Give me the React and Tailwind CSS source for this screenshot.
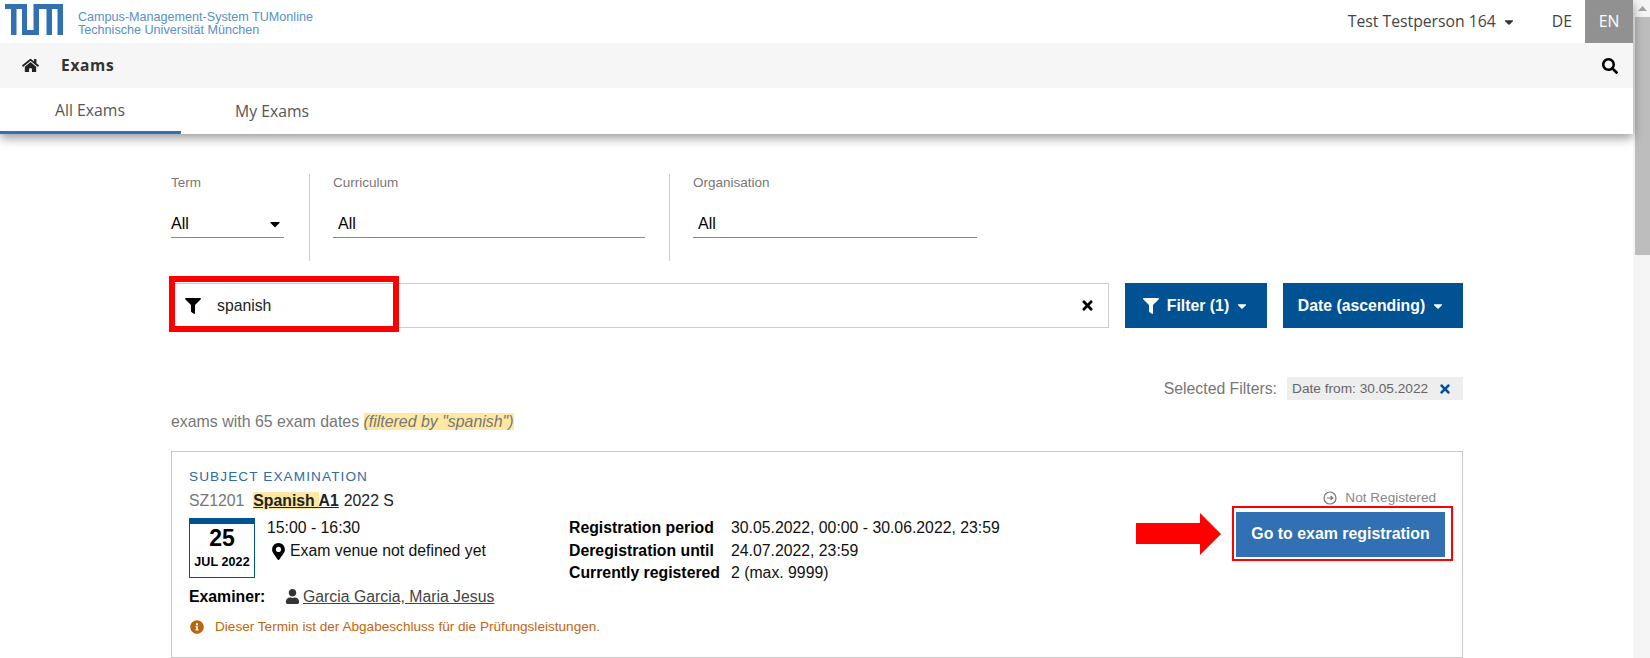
import React from "react";
import { FaHome, FaSearch, FaFilter, FaTimes, FaMapMarkerAlt, FaUser, FaInfoCircle, FaCaretDown } from "react-icons/fa";

const sans = "font-['Liberation_Sans',Arial,sans-serif]";
const open = "font-['Open_Sans',sans-serif]";

const TumLogo = () => (
  <svg width="58" height="31" viewBox="0 0 58 31" fill="#3070b3">
    <path d="M0 0H22V26H28.5V0H58V31H52.5V5H47V31H41.5V5H34V31H17V5H11.5V31H6V5H0Z" />
  </svg>
);

const Field = ({ label, value, width, select }) => (
  <div className={width}>
    <div className="mt-[2px] text-[13.5px] leading-[14px] text-[#777]">{label}</div>
    <div className={`mt-[20px] flex h-[28px] items-center justify-between border-b border-[#888] text-[16px] text-black ${select ? "" : "pl-[5px]"}`}>
      <span>{value}</span>
      {select && <FaCaretDown className="mr-[1px] text-[16px]" />}
    </div>
  </div>
);

const Row = ({ label, value }) => (
  <div className="flex h-[22.5px] items-center text-[15.8px]">
    <span className="w-[162px] font-bold text-black">{label}</span>
    <span className="text-[#111]">{value}</span>
  </div>
);

export default function App() {
  return (
    <div className={`flex h-[658px] w-[1650px] overflow-hidden bg-white ${sans}`}>
      <div className="w-[1633px] shrink-0">
        <div className="relative z-10 bg-white shadow-[0_4px_10px_rgba(0,0,0,0.4)]">
          <div className="flex h-[43px] items-center justify-between pl-[5px]">
            <div className="flex items-center">
              <div className="mt-[-4px]">
                <TumLogo />
              </div>
              <div className="ml-[15px] mt-[5px] text-[12.6px] leading-[13.5px] text-[#5b8fc7]">
                <div>Campus-Management-System TUMonline</div>
                <div>Technische Universität München</div>
              </div>
            </div>
            <div className={`flex h-full items-center text-[15.75px] text-[#444] ${open}`}>
              <span>Test Testperson 164</span>
              <FaCaretDown className="ml-[6px] text-[14px] text-[#333]" />
              <span className="ml-[36px] mr-[13px]">DE</span>
              <span className="flex h-full w-[48px] items-center justify-center bg-[#919191] text-white">EN</span>
            </div>
          </div>
          <div className={`flex h-[45px] items-center justify-between bg-[#f6f6f6] pl-[22px] pr-[15px] ${open}`}>
            <div className="flex items-center">
              <FaHome className="text-[17px] text-[#222]" />
              <span className="ml-[22px] text-[15.5px] font-bold tracking-[0.7px] text-[#333]">Exams</span>
            </div>
            <FaSearch className="text-[16px] text-black" />
          </div>
          <div className={`flex h-[46px] text-[15.75px] text-[#555] ${open}`}>
            <div className="flex w-[181px] items-center justify-center border-b-[3px] border-[#3070b3] pr-[1px] pt-[3px]">All Exams</div>
            <div className="ml-[54px] flex items-center pt-[1px]">My Exams</div>
          </div>
        </div>

        <div className="ml-[171px] w-[1292px] pt-[40px]">
          <div className="flex h-[87px]">
            <Field label="Term" value="All" width="w-[113px]" select />
            <div className="ml-[25px] mr-[23px] w-px bg-[#ccc]" />
            <Field label="Curriculum" value="All" width="w-[312px]" />
            <div className="ml-[24px] mr-[23px] w-px bg-[#ccc]" />
            <Field label="Organisation" value="All" width="w-[284px]" />
          </div>

          <div className="mt-[22px] flex h-[45px]">
            <div className="relative flex w-[938px] items-center border border-[#ccc] px-[13px] text-[15.75px] text-[#222]">
              <FaFilter className="text-[16px] text-black" />
              <span className="ml-[16px]">spanish</span>
              <FaTimes className="ml-auto text-[15px] text-black" />
              <div className="absolute left-[-3px] top-[-8px] h-[56px] w-[230px] border-[6px] border-[#ff0000]" />
            </div>
            <button className="ml-[16px] flex w-[142px] items-center justify-center bg-[#005293] text-[15.8px] font-bold text-white">
              <FaFilter className="mr-[8px] text-[16px]" />
              Filter (1)
              <FaCaretDown className="ml-[6px] text-[14px]" />
            </button>
            <button className="ml-[16px] flex w-[180px] items-center justify-center bg-[#005293] pr-[3px] text-[15.8px] font-bold text-white">
              Date (ascending)
              <FaCaretDown className="ml-[6px] text-[14px]" />
            </button>
          </div>

          <div className="mt-[49px] flex items-center justify-end">
            <span className="text-[15.8px] text-[#777]">Selected Filters:</span>
            <div className="ml-[10px] flex h-[23px] w-[176px] items-center bg-[#eeeeee] pl-[5px] text-[13.7px] text-[#666]">
              Date from: 30.05.2022
              <FaTimes className="ml-[10px] text-[14px] text-[#005293]" />
            </div>
          </div>

          <div className="mt-[12px] h-[18px] text-[15.9px] leading-[18px] text-[#777]">
            exams with 65 exam dates <span className="bg-[#ffe8a3] italic">(filtered by "spanish")</span>
          </div>

          <div className="mt-[20px] flex h-[207px] border border-[#c8c8c8] pl-[17px] pr-[9px] pt-[18px]">
            <div className="flex-1">
              <div className="text-[13.6px] leading-[14px] tracking-[1.1px] text-[#2d6ca8]">SUBJECT EXAMINATION</div>
              <div className="mt-[7px] text-[15.8px] leading-[20px] text-[#222]">
                <span className="text-[#777]">SZ1201</span>
                <span className="ml-[9px] font-bold underline">
                  <span className="bg-[#ffe8a3]">Spanish </span>A1
                </span>
                <span className="ml-[5px]">2022 S</span>
              </div>
              <div className="mt-[7px] flex h-[60px]">
                <div className="h-[60px] w-[66px] border border-t-[6px] border-[#005293] text-center text-black">
                  <div className="text-[23px] font-bold leading-[28px]">25</div>
                  <div className="mt-[3px] text-[12.5px] font-bold leading-[14px] tracking-[0.1px]">JUL 2022</div>
                </div>
                <div className="ml-[12px] w-[302px] text-[15.8px] text-[#111]">
                  <div className="mt-[-1px] flex h-[23px] items-center">15:00 - 16:30</div>
                  <div className="flex h-[23px] items-center pl-[3px]">
                    <FaMapMarkerAlt className="mr-[3px] text-[17px] text-black" />
                    Exam venue not defined yet
                  </div>
                </div>
                <div className="mt-[-1px]">
                  <Row label="Registration period" value="30.05.2022, 00:00 - 30.06.2022, 23:59" />
                  <Row label="Deregistration until" value="24.07.2022, 23:59" />
                  <Row label="Currently registered" value="2 (max. 9999)" />
                </div>
              </div>
              <div className="mt-[10px] flex h-[18px] items-center text-[15.8px]">
                <span className="w-[96px] font-bold text-black">Examiner:</span>
                <FaUser className="mr-[3px] text-[15px] text-[#333]" />
                <span className="text-[#444] underline">Garcia Garcia, Maria Jesus</span>
              </div>
              <div className="mt-[13px] flex h-[16px] items-center text-[13.6px] text-[#c4660f]">
                <FaInfoCircle className="ml-[1px] mr-[11px] text-[14px] text-[#b8660f]" />
                Dieser Termin ist der Abgabeschluss für die Prüfungsleistungen.
              </div>
            </div>
            <div className="relative flex w-[210px] flex-col items-end">
              <div className="mr-[17px] mt-[20px] flex h-[16px] items-center text-[13.6px] text-[#888]">
                <svg className="mr-[8px]" width="14" height="14" viewBox="0 0 14 14" fill="none" stroke="#777" strokeWidth="1.2">
                  <circle cx="7" cy="7" r="6" />
                  <path d="M4 7H9.5M7.5 5L9.8 7L7.5 9" />
                </svg>
                Not Registered
              </div>
              <button className="mr-[8px] mt-[6px] h-[45px] w-[209px] bg-[#3070b3] text-[15.9px] font-bold text-white">
                Go to exam registration
              </button>
              <div className="absolute right-0 top-[36px] h-[55px] w-[221px] border-2 border-[#ff0000]" />
              <svg className="absolute left-[-107px] top-[43px]" width="85" height="42" viewBox="0 0 85 42" fill="#ff0000">
                <path d="M0 10H64V0L85 21L64 42V31H0Z" />
              </svg>
            </div>
          </div>
        </div>
      </div>

      <div className="w-[17px] bg-[#f5f5f5] pl-[2px]">
        <div className="flex h-[17px] items-center justify-center">
          <svg width="9" height="5" viewBox="0 0 9 5" fill="#a3a3a3"><path d="M4.5 0L9 5H0Z" /></svg>
        </div>
        <div className="h-[238px] w-full bg-[#bdbdbd]" />
      </div>
    </div>
  );
}
